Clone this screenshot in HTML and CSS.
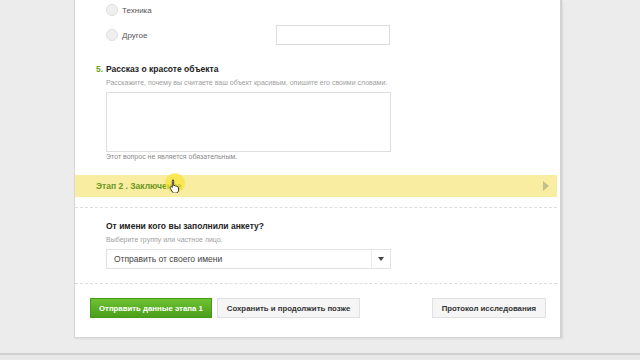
FILE: index.html
```html
<!DOCTYPE html>
<html lang="ru">
<head>
    <meta charset="UTF-8">
    <meta name="viewport" content="width=device-width, initial-scale=1.0">
    <title>Анкета</title>
    <link rel="stylesheet" href="styles.css">
</head>
<body>
    <main class="card">
        <div class="question">
            <div class="option">
                <span class="radio"></span>
                <span class="label">Техника</span>
            </div>
            <div class="option">
                <span class="radio"></span>
                <span class="label">Другое</span>
                <input class="other" type="text">
            </div>
        </div>

        <div class="question story">
            <h3 class="q-title"><span class="num">5.</span>Рассказ о красоте объекта</h3>
            <p class="hint">Расскажите, почему вы считаете ваш объект красивым, опишите его своими словами.</p>
            <textarea class="area"></textarea>
            <p class="note">Этот вопрос не является обязательным.</p>
        </div>

        <div class="stage">
            <span class="stage-name">Этап 2 . Заключение</span>
            <span class="stage-arrow"></span>
            <span class="cursor-spot"></span>
            <svg class="cursor" width="12" height="14" viewBox="0 0 12 14">
                <path d="M3.5 1.2c.7 0 1.2.5 1.2 1.2v4.2l.4-.1c.6-.2 1.2.1 1.4.6.6-.3 1.3 0 1.5.6.6-.2 1.3.1 1.4.8l.2 2.6c0 1.6-1 3-2.6 3H5.4c-.8 0-1.5-.4-1.9-1L1.2 9.2c-.3-.6 0-1.3.6-1.5.4-.2.9 0 1.2.3l.3.4V2.4c0-.7.5-1.2 1.2-1.2z" fill="#fff" stroke="#222" stroke-width=".9"/>
            </svg>
        </div>

        <div class="question sender">
            <h3 class="q-title">От имени кого вы заполнили анкету?</h3>
            <p class="hint">Выберите группу или частное лицо.</p>
            <div class="select">
                <span class="select-text">Отправить от своего имени</span>
                <span class="select-btn"><span class="tri"></span></span>
            </div>
        </div>

        <div class="actions">
            <button class="btn btn-green">Отправить данные этапа 1</button>
            <button class="btn">Сохранить и продолжить позже</button>
            <button class="btn btn-right">Протокол исследования</button>
        </div>
    </main>
    <footer class="footer"></footer>
</body>
</html>
```

FILE: styles.css
```css
body{
    margin: 0;
    background: #ececec;
    font-family: "Liberation Sans", Arial, sans-serif;
    color: #333;
}
.card{
    margin-left: 74px;
    width: 485px;
    background: #fff;
    border: 1px solid #d6d6d6;
    border-top: none;
    border-right: 2px solid #d2d2d2;
    box-shadow: 1px 1px 2px rgba(0,0,0,0.08);
    padding-bottom: 19px;
}
.question{
    padding-left: 31px;
}
.option{
    display: flex;
    align-items: center;
    height: 20px;
    margin-bottom: 5px;
    font-size: 8px;
    color: #555;
}
.radio{
    width: 10px;
    height: 10px;
    border-radius: 50%;
    border: 1px solid #dedede;
    background: #efefef;
    margin-right: 4px;
}
.label{
    width: 154px;
}
.other{
    width: 112px;
    height: 18px;
    padding: 0;
    border: 1px solid #dcdcdc;
    margin: 0;
}
.story{
    padding-top: 13px;
}
.q-title{
    margin: 0;
    font-size: 8.5px;
    font-weight: bold;
    color: #222;
    line-height: 12px;
}
.num{
    color: #6a9f22;
    margin-left: -10px;
    display: inline-block;
    width: 10px;
}
.hint{
    margin: 3px 0 4px;
    font-size: 7px;
    color: #a0a0a0;
    line-height: 10px;
}
.area{
    display: block;
    width: 283px;
    height: 58px;
    margin: 0;
    padding: 0;
    border: 1px solid #dedede;
    resize: none;
}
.note{
    margin: 0;
    font-size: 7px;
    color: #8a8a8a;
    line-height: 10px;
}
.stage{
    position: relative;
    display: flex;
    align-items: center;
    justify-content: space-between;
    height: 22px;
    margin: 13px 3px 0 0;
    padding: 0 8px 0 21px;
    background: #f9eda1;
}
.stage-name{
    font-size: 8.5px;
    font-weight: bold;
    color: #6a961c;
}
.stage-arrow{
    width: 0;
    height: 0;
    border-left: 6px solid #c2c08a;
    border-top: 5px solid transparent;
    border-bottom: 5px solid transparent;
}
.cursor-spot{
    position: absolute;
    left: 90px;
    top: -2px;
    width: 20px;
    height: 20px;
    border-radius: 50%;
    background: rgba(250, 228, 50, 0.7);
}
.cursor{
    position: absolute;
    left: 94px;
    top: 4px;
}
.sender{
    margin-top: 10px;
    padding-top: 12px;
    padding-bottom: 14px;
    border-top: 1px dashed #dedede;
    margin-right: 3px;
}
.select{
    display: flex;
    width: 283px;
    height: 18px;
    border: 1px solid #e2e2e2;
    align-items: center;
}
.select-text{
    flex: 1;
    font-size: 8.5px;
    color: #444;
    padding-left: 7px;
}
.select-btn{
    width: 18px;
    height: 18px;
    border-left: 1px solid #ececec;
    display: flex;
    align-items: center;
    justify-content: center;
}
.tri{
    width: 0;
    height: 0;
    border-top: 4px solid #444;
    border-left: 3px solid transparent;
    border-right: 3px solid transparent;
}
.actions{
    display: flex;
    align-items: center;
    margin-right: 3px;
    padding: 14px 11px 0 15px;
    border-top: 1px dashed #dedede;
    gap: 5px;
}
.btn{
    height: 20px;
    padding: 0 9px;
    border: 1px solid #e0e0e0;
    background: #f5f5f5;
    font-family: "Liberation Sans", Arial, sans-serif;
    font-size: 7.8px;
    font-weight: bold;
    color: #333;
    white-space: nowrap;
}
.btn-green{
    padding: 0 8px;
    border-color: #4a9a1a;
    background: linear-gradient(#6ec232, #4b9e1a);
    color: #fff;
}
.btn-right{
    margin-left: auto;
}
.footer{
    margin-top: 15px;
    height: 8px;
    border-top: 2px solid #d0d0d0;
    background: #e9e9e9;
}
```
